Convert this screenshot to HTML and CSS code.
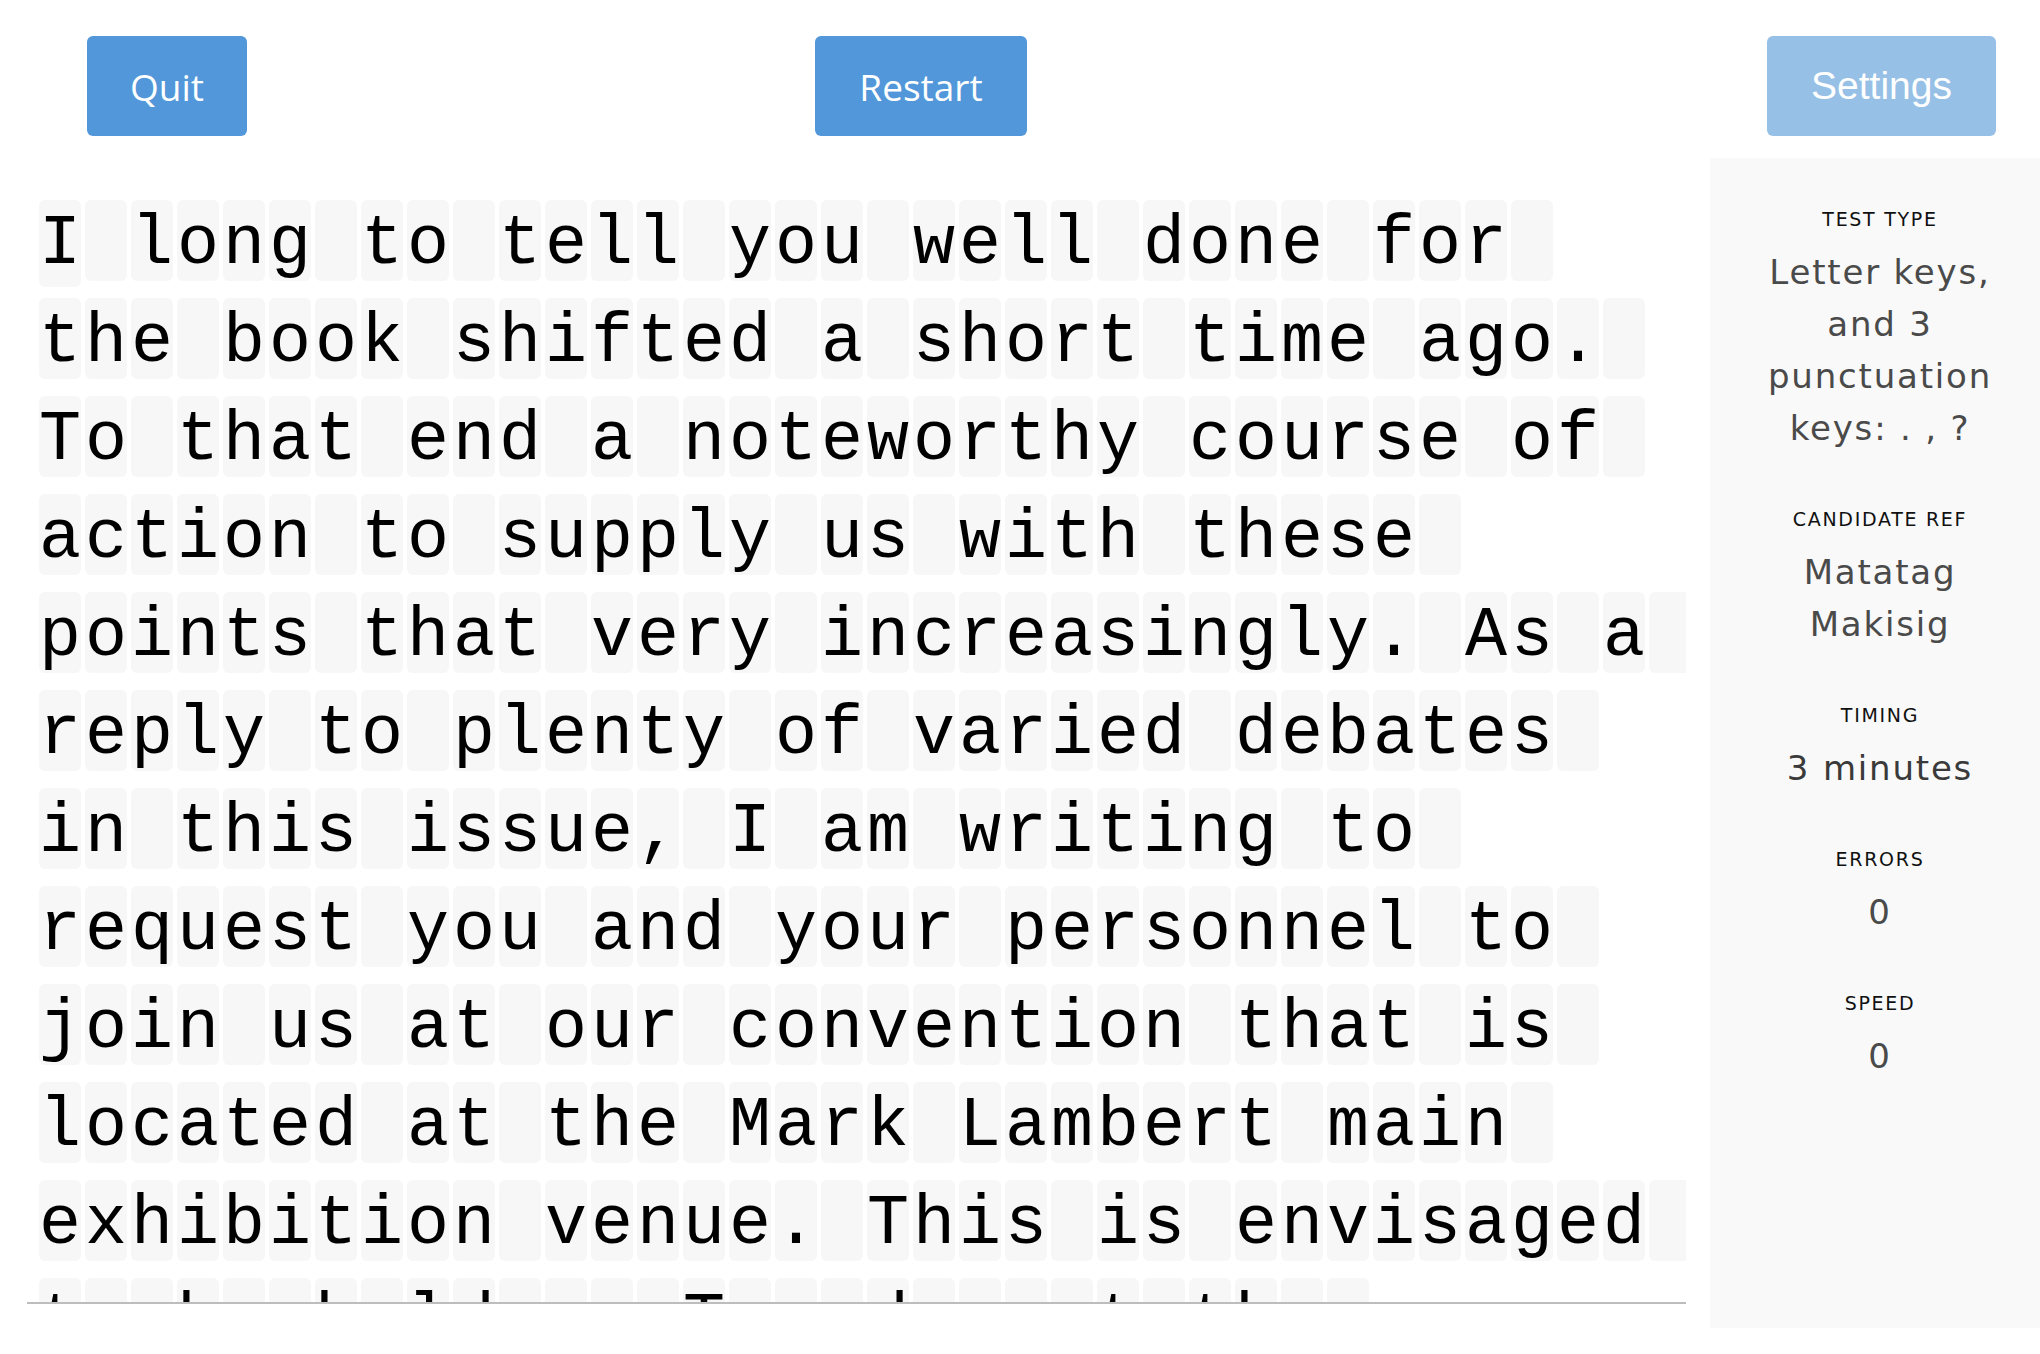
FILE: index.html
```html
<!DOCTYPE html>
<html lang="en">
<head>
<meta charset="utf-8">
<title>Typing test</title>
<link rel="stylesheet" href="styles.css">
</head>
<body>
<header class="topbar">
  <button class="btn btn-quit">Quit</button>
  <button class="btn btn-restart">Restart</button>
  <button class="btn btn-settings" disabled>Settings</button>
</header>
<main class="main">
  <section class="panel">
    <div class="row"><span class="cur">I</span><span> </span><span>l</span><span>o</span><span>n</span><span>g</span><span> </span><span>t</span><span>o</span><span> </span><span>t</span><span>e</span><span>l</span><span>l</span><span> </span><span>y</span><span>o</span><span>u</span><span> </span><span>w</span><span>e</span><span>l</span><span>l</span><span> </span><span>d</span><span>o</span><span>n</span><span>e</span><span> </span><span>f</span><span>o</span><span>r</span><span> </span></div>
    <div class="row"><span>t</span><span>h</span><span>e</span><span> </span><span>b</span><span>o</span><span>o</span><span>k</span><span> </span><span>s</span><span>h</span><span>i</span><span>f</span><span>t</span><span>e</span><span>d</span><span> </span><span>a</span><span> </span><span>s</span><span>h</span><span>o</span><span>r</span><span>t</span><span> </span><span>t</span><span>i</span><span>m</span><span>e</span><span> </span><span>a</span><span>g</span><span>o</span><span>.</span><span> </span></div>
    <div class="row"><span>T</span><span>o</span><span> </span><span>t</span><span>h</span><span>a</span><span>t</span><span> </span><span>e</span><span>n</span><span>d</span><span> </span><span>a</span><span> </span><span>n</span><span>o</span><span>t</span><span>e</span><span>w</span><span>o</span><span>r</span><span>t</span><span>h</span><span>y</span><span> </span><span>c</span><span>o</span><span>u</span><span>r</span><span>s</span><span>e</span><span> </span><span>o</span><span>f</span><span> </span></div>
    <div class="row"><span>a</span><span>c</span><span>t</span><span>i</span><span>o</span><span>n</span><span> </span><span>t</span><span>o</span><span> </span><span>s</span><span>u</span><span>p</span><span>p</span><span>l</span><span>y</span><span> </span><span>u</span><span>s</span><span> </span><span>w</span><span>i</span><span>t</span><span>h</span><span> </span><span>t</span><span>h</span><span>e</span><span>s</span><span>e</span><span> </span></div>
    <div class="row"><span>p</span><span>o</span><span>i</span><span>n</span><span>t</span><span>s</span><span> </span><span>t</span><span>h</span><span>a</span><span>t</span><span> </span><span>v</span><span>e</span><span>r</span><span>y</span><span> </span><span>i</span><span>n</span><span>c</span><span>r</span><span>e</span><span>a</span><span>s</span><span>i</span><span>n</span><span>g</span><span>l</span><span>y</span><span>.</span><span> </span><span>A</span><span>s</span><span> </span><span>a</span><span> </span></div>
    <div class="row"><span>r</span><span>e</span><span>p</span><span>l</span><span>y</span><span> </span><span>t</span><span>o</span><span> </span><span>p</span><span>l</span><span>e</span><span>n</span><span>t</span><span>y</span><span> </span><span>o</span><span>f</span><span> </span><span>v</span><span>a</span><span>r</span><span>i</span><span>e</span><span>d</span><span> </span><span>d</span><span>e</span><span>b</span><span>a</span><span>t</span><span>e</span><span>s</span><span> </span></div>
    <div class="row"><span>i</span><span>n</span><span> </span><span>t</span><span>h</span><span>i</span><span>s</span><span> </span><span>i</span><span>s</span><span>s</span><span>u</span><span>e</span><span>,</span><span> </span><span>I</span><span> </span><span>a</span><span>m</span><span> </span><span>w</span><span>r</span><span>i</span><span>t</span><span>i</span><span>n</span><span>g</span><span> </span><span>t</span><span>o</span><span> </span></div>
    <div class="row"><span>r</span><span>e</span><span>q</span><span>u</span><span>e</span><span>s</span><span>t</span><span> </span><span>y</span><span>o</span><span>u</span><span> </span><span>a</span><span>n</span><span>d</span><span> </span><span>y</span><span>o</span><span>u</span><span>r</span><span> </span><span>p</span><span>e</span><span>r</span><span>s</span><span>o</span><span>n</span><span>n</span><span>e</span><span>l</span><span> </span><span>t</span><span>o</span><span> </span></div>
    <div class="row"><span>j</span><span>o</span><span>i</span><span>n</span><span> </span><span>u</span><span>s</span><span> </span><span>a</span><span>t</span><span> </span><span>o</span><span>u</span><span>r</span><span> </span><span>c</span><span>o</span><span>n</span><span>v</span><span>e</span><span>n</span><span>t</span><span>i</span><span>o</span><span>n</span><span> </span><span>t</span><span>h</span><span>a</span><span>t</span><span> </span><span>i</span><span>s</span><span> </span></div>
    <div class="row"><span>l</span><span>o</span><span>c</span><span>a</span><span>t</span><span>e</span><span>d</span><span> </span><span>a</span><span>t</span><span> </span><span>t</span><span>h</span><span>e</span><span> </span><span>M</span><span>a</span><span>r</span><span>k</span><span> </span><span>L</span><span>a</span><span>m</span><span>b</span><span>e</span><span>r</span><span>t</span><span> </span><span>m</span><span>a</span><span>i</span><span>n</span><span> </span></div>
    <div class="row"><span>e</span><span>x</span><span>h</span><span>i</span><span>b</span><span>i</span><span>t</span><span>i</span><span>o</span><span>n</span><span> </span><span>v</span><span>e</span><span>n</span><span>u</span><span>e</span><span>.</span><span> </span><span>T</span><span>h</span><span>i</span><span>s</span><span> </span><span>i</span><span>s</span><span> </span><span>e</span><span>n</span><span>v</span><span>i</span><span>s</span><span>a</span><span>g</span><span>e</span><span>d</span><span> </span></div>
    <div class="row"><span>t</span><span>o</span><span> </span><span>b</span><span>e</span><span> </span><span>h</span><span>e</span><span>l</span><span>d</span><span> </span><span>o</span><span>n</span><span> </span><span>T</span><span>u</span><span>e</span><span>s</span><span>d</span><span>a</span><span>y</span><span> </span><span>a</span><span>t</span><span> </span><span>t</span><span>h</span><span>e</span><span> </span></div>
  </section>
  <aside class="sidebar">
    <div class="stat">
      <div class="stat-label">TEST TYPE</div>
      <div class="stat-value">Letter keys, and 3 punctuation keys: . , ?</div>
    </div>
    <div class="stat">
      <div class="stat-label">CANDIDATE REF</div>
      <div class="stat-value">Matatag Makisig</div>
    </div>
    <div class="stat">
      <div class="stat-label">TIMING</div>
      <div class="stat-value stat-value-dark">3 minutes</div>
    </div>
    <div class="stat">
      <div class="stat-label">ERRORS</div>
      <div class="stat-value">0</div>
    </div>
    <div class="stat">
      <div class="stat-label">SPEED</div>
      <div class="stat-value">0</div>
    </div>
  </aside>
</main>
</body>
</html>
```

FILE: styles.css
```css
html, body {
  margin: 0;
  padding: 0;
  background: #ffffff;
}

body {
  font-family: "DejaVu Sans", "Noto Sans", sans-serif;
  width: 2040px;
  height: 1354px;
  overflow: hidden;
}

.topbar {
  display: flex;
  align-items: center;
  padding: 36px 44px 0 87px;
  height: 100px;
}

.btn {
  height: 100px;
  border: none;
  border-radius: 6px;
  background: #5197d9;
  color: #ffffff;
  font-family: "Open Sans", "DejaVu Sans", sans-serif;
  font-size: 37px;
  display: flex;
  align-items: center;
  justify-content: center;
  padding: 0;
  cursor: pointer;
}

.btn-quit {
  width: 160px;
}

.btn-restart {
  width: 212px;
  margin-left: 568px;
}

.btn-settings {
  width: 229px;
  margin-left: auto;
  background: #97c0e6;
  font-family: "Liberation Sans", Arial, sans-serif;
  font-size: 39px;
  cursor: default;
}

.main {
  display: flex;
  align-items: flex-start;
  margin-top: 22px;
}

.panel {
  margin-left: 27px;
  width: 1649px;
  height: 1102px;
  padding-top: 42px;
  padding-left: 10px;
  box-sizing: content-box;
  overflow: hidden;
  border-bottom: 2px solid #bdbdbd;
  display: flex;
  flex-direction: column;
  gap: 17px;
}

.row {
  display: flex;
  align-items: flex-start;
  flex-shrink: 0;
}

.row > span {
  flex-shrink: 0;
  width: 42px;
  height: 73px;
  padding-top: 8px;
  margin: 0 2px;
  border-radius: 6px;
  background: #f7f7f7;
  font-family: "Liberation Mono", "Courier New", monospace;
  font-size: 70px;
  line-height: 73px;
  color: #000000;
  text-align: center;
  white-space: pre;
}

.row > span.cur {
  height: 79px;
  margin-bottom: -6px;
}

.sidebar {
  margin-left: 24px;
  width: 330px;
  height: 1170px;
  box-sizing: border-box;
  padding: 48px 35px 0 45px;
  background: #f9f9f9;
  text-align: center;
}

.stat {
  margin-bottom: 52px;
}

.stat-label {
  font-size: 19px;
  line-height: 26px;
  letter-spacing: 1.7px;
  color: #111111;
  margin-bottom: 14px;
}

.stat-value {
  font-size: 34px;
  line-height: 52px;
  letter-spacing: 1.8px;
  color: #4a4a4a;
}

.stat-value-dark {
  color: #3a3a3a;
}
```
